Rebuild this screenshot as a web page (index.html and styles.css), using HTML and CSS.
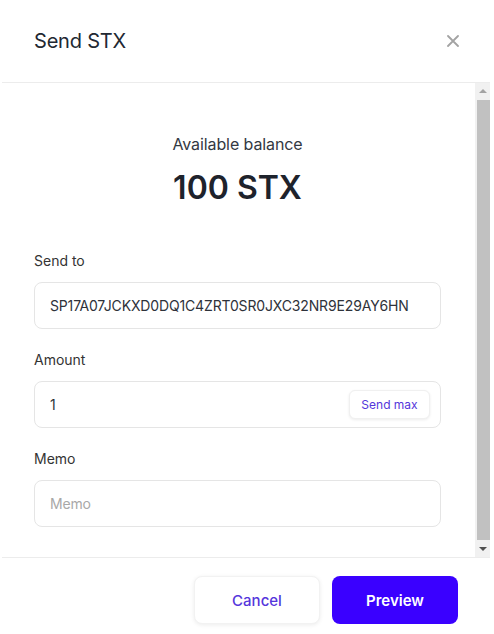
FILE: index.html
```html
<!DOCTYPE html>
<html lang="en">
<head>
<meta charset="utf-8">
<title>Send STX</title>
<link rel="stylesheet" href="styles.css">
</head>
<body>
<div class="modal">
  <header class="modal-header">
    <h1 class="modal-title">Send STX</h1>
    <button class="close-btn" aria-label="Close">
      <svg width="12" height="12" viewBox="0 0 12 12"><path d="M1 1 L11 11 M11 1 L1 11" stroke="#a3a3a3" stroke-width="1.8" stroke-linecap="round" fill="none"/></svg>
    </button>
  </header>
  <div class="modal-body">
    <div class="body-content">
      <div class="balance">
        <div class="balance-label">Available balance</div>
        <div class="balance-value">100 STX</div>
      </div>
      <div class="field">
        <label class="field-label">Send to</label>
        <div class="input"><span class="input-text">SP17A07JCKXD0DQ1C4ZRT0SR0JXC32NR9E29AY6HN</span></div>
      </div>
      <div class="field">
        <label class="field-label">Amount</label>
        <div class="input"><span class="input-text">1</span><button class="send-max">Send max</button></div>
      </div>
      <div class="field">
        <label class="field-label">Memo</label>
        <div class="input"><span class="input-text placeholder">Memo</span></div>
      </div>
    </div>
    <div class="scrollbar">
      <div class="sb-btn"><span class="tri-up"></span></div>
      <div class="sb-track"><div class="sb-thumb"></div></div>
      <div class="sb-btn"><span class="tri-down"></span></div>
    </div>
  </div>
  <footer class="modal-footer">
    <button class="btn btn-cancel">Cancel</button>
    <button class="btn btn-preview">Preview</button>
  </footer>
</div>
</body>
</html>
```
FILE: styles.css
```css
* { box-sizing: border-box; }
html, body { margin: 0; padding: 0; background: #fff; }
body {
  font-family: Inter, "Noto Sans", sans-serif;
  color: #242a33;
  width: 494px;
  height: 634px;
  overflow: hidden;
}
.modal {
  margin: 0 4px 0 2px;
  height: 634px;
  display: flex;
  flex-direction: column;
  background: #fff;
}
.modal-header {
  height: 83px;
  flex: none;
  display: flex;
  align-items: center;
  justify-content: space-between;
  padding: 0 31px 0 32px;
  border-bottom: 1px solid #ececec;
}
.modal-title {
  margin: 0;
  font-size: 20px;
  font-weight: 400;
  color: #222832;
  line-height: 24px;
  padding-bottom: 1px;
  letter-spacing: -0.2px;
}
.close-btn {
  border: 0;
  background: none;
  padding: 0;
  width: 12px;
  height: 12px;
  display: flex;
}
.modal-body {
  height: 475px;
  flex: none;
  display: flex;
  border-bottom: 1px solid #ececec;
}
.body-content {
  flex: 1;
  padding: 51px 34px 0 32px;
}
.balance {
  display: flex;
  flex-direction: column;
  align-items: center;
  gap: 14px;
  margin-bottom: 43px;
}
.balance-label {
  font-size: 16px;
  line-height: 20px;
  color: #333842;
  letter-spacing: -0.1px;
}
.balance-value {
  font-size: 32px;
  line-height: 40px;
  font-weight: 600;
  color: #1e232c;
}
.field { margin-bottom: 21px; }
.field-label {
  display: block;
  font-size: 14px;
  line-height: 20px;
  color: #333;
  margin-bottom: 11px;
}
.input {
  height: 47px;
  border: 1px solid #e5e5e5;
  border-radius: 8px;
  display: flex;
  align-items: center;
  justify-content: space-between;
  padding: 0 10px 0 15px;
}
.input-text {
  font-size: 14px;
  color: #2e323a;
  letter-spacing: -0.15px;
}
.placeholder { color: #a8a8a8; }
.send-max {
  font-family: inherit;
  font-size: 12px;
  color: #5436db;
  background: #fff;
  border: 1px solid #f0f0f0;
  border-radius: 6px;
  height: 29px;
  width: 81px;
  padding: 0;
  box-shadow: 0 1px 3px rgba(0,0,0,0.08);
}
.scrollbar {
  width: 15px;
  flex: none;
  background: #f1f1f1;
  display: flex;
  flex-direction: column;
}
.sb-btn {
  height: 16px;
  display: flex;
  align-items: center;
  justify-content: center;
}
.tri-up {
  width: 0; height: 0;
  border-left: 4px solid transparent;
  border-right: 4px solid transparent;
  border-bottom: 4px solid #a3a3a3;
}
.tri-down {
  width: 0; height: 0;
  border-left: 4px solid transparent;
  border-right: 4px solid transparent;
  border-top: 4px solid #505050;
}
.sb-track {
  flex: 1;
  padding: 1px 0 1px 2px;
  display: flex;
}
.sb-thumb {
  flex: 1;
  background: #c1c1c1;
}
.modal-footer {
  flex: 1;
  display: flex;
  justify-content: flex-end;
  align-items: flex-start;
  gap: 12px;
  padding: 18px 32px 0 0;
}
.btn {
  width: 126px;
  height: 48px;
  border-radius: 8px;
  font-family: inherit;
  font-size: 15px;
  border: 0;
}
.btn-cancel {
  background: #fff;
  color: #5536dc;
  font-weight: 500;
  border: 1px solid #f2f2f2;
  box-shadow: 0 1px 4px rgba(0,0,0,0.08);
}
.btn-preview {
  background: #3a00ff;
  color: #fff;
  font-weight: 600;
}
```
